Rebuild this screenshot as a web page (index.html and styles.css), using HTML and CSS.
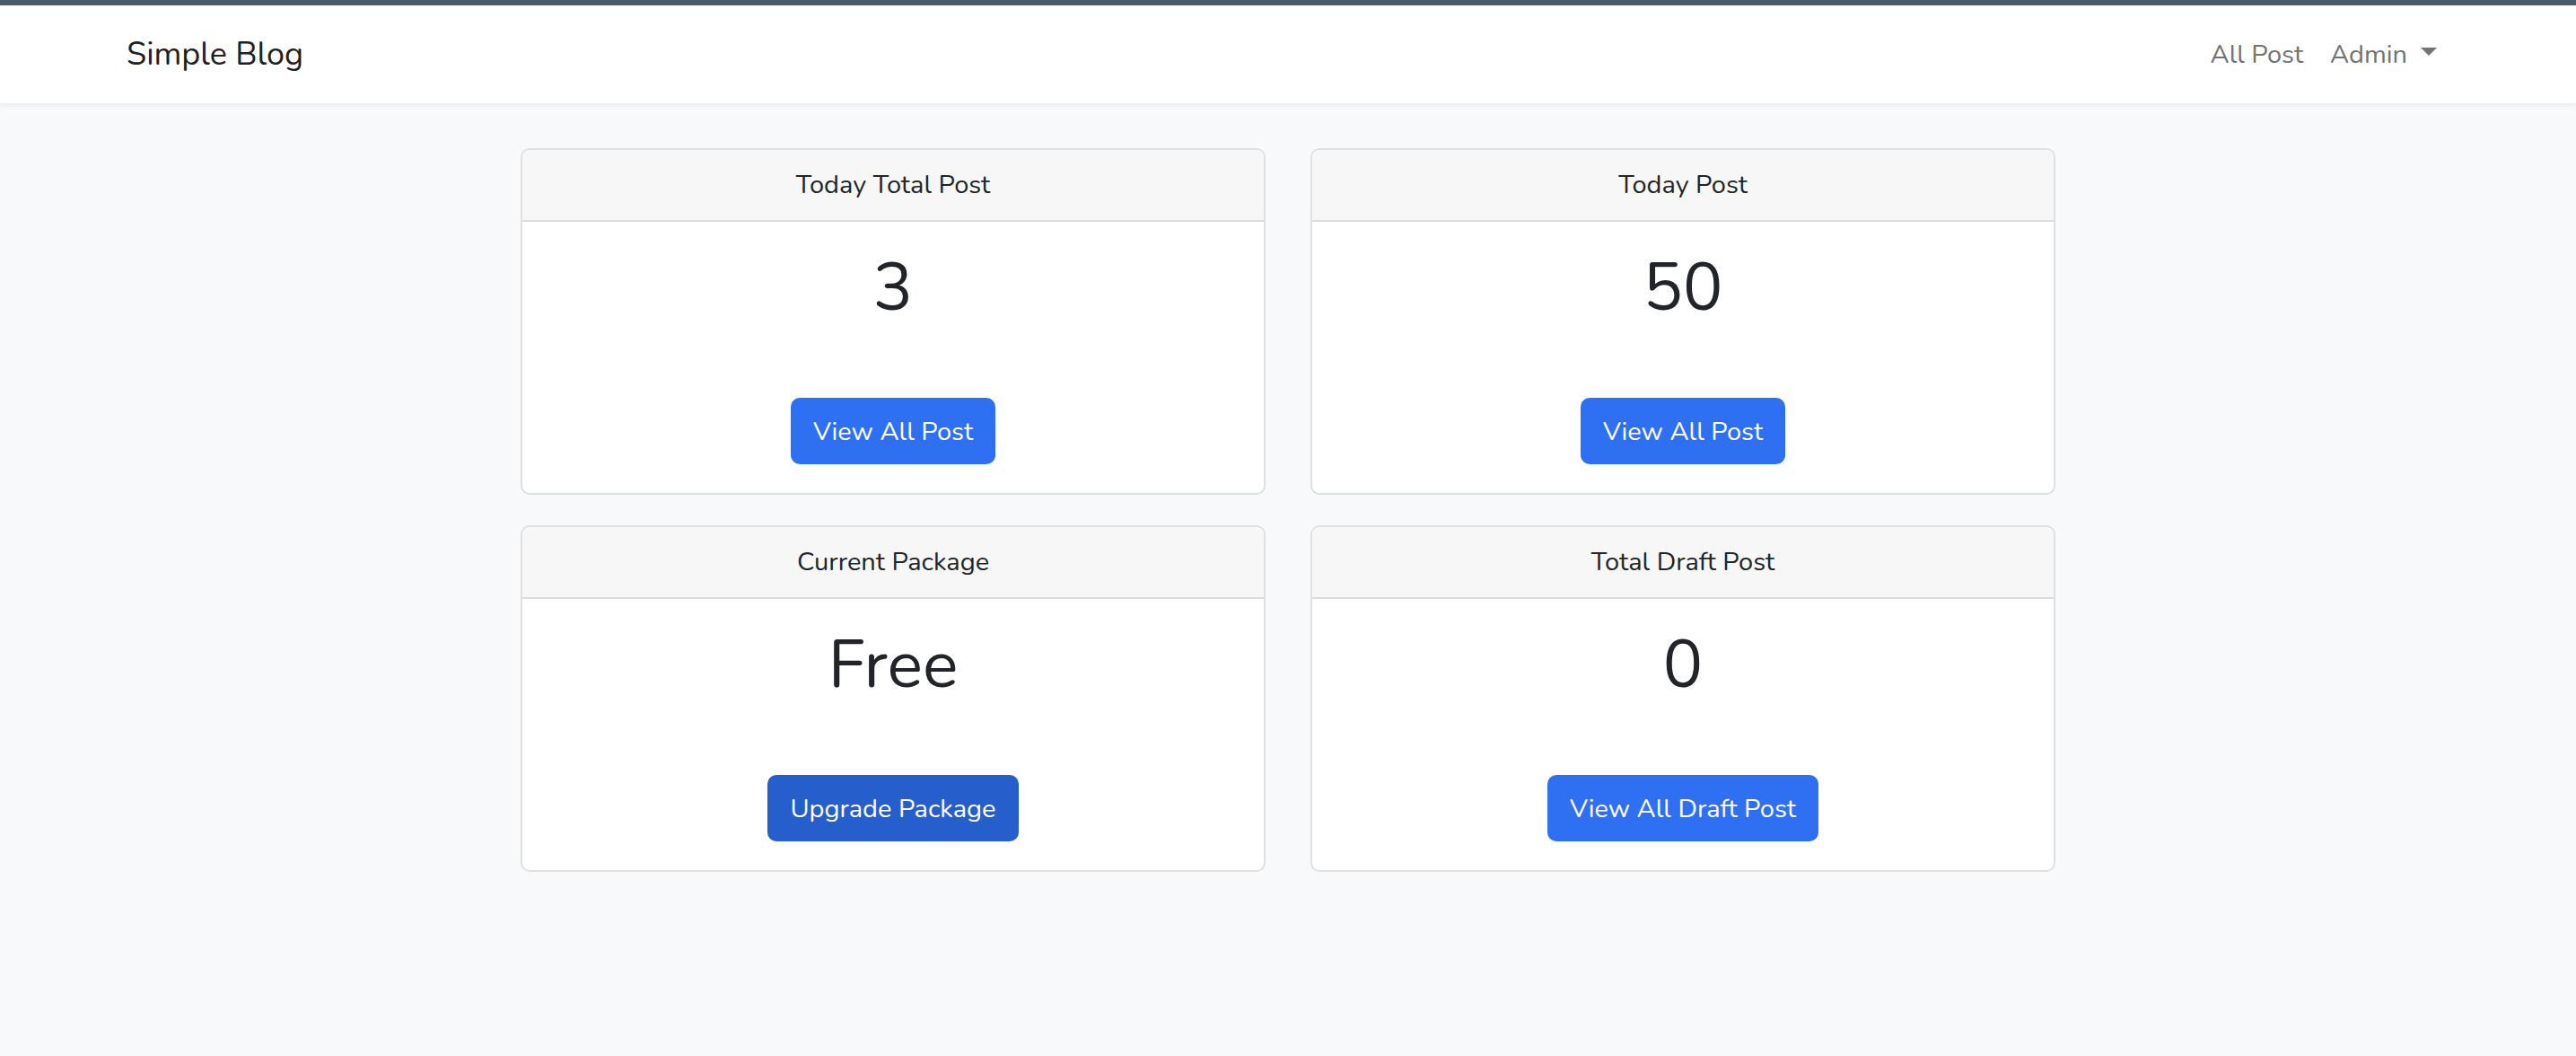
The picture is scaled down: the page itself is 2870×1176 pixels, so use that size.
FILE: index.html
```html
<!DOCTYPE html>
<html lang="en">
<head>
<meta charset="utf-8">
<title>Simple Blog</title>
<link rel="stylesheet" href="styles.css">
</head>
<body>
<nav class="navbar">
  <div class="nav-inner">
    <a class="brand" href="#">Simple Blog</a>
    <ul class="nav-links">
      <li><a class="nav-link" href="#">All Post</a></li>
      <li><a class="nav-link dropdown" href="#">Admin<span class="caret"></span></a></li>
    </ul>
  </div>
</nav>
<main class="content">
  <div class="grid">
    <div class="card">
      <div class="card-header">Today Total Post</div>
      <div class="card-body">
        <h1 class="stat">3</h1>
        <a class="btn" href="#">View All Post</a>
      </div>
    </div>
    <div class="card">
      <div class="card-header">Today Post</div>
      <div class="card-body">
        <h1 class="stat">50</h1>
        <a class="btn" href="#">View All Post</a>
      </div>
    </div>
    <div class="card">
      <div class="card-header">Current Package</div>
      <div class="card-body">
        <h1 class="stat">Free</h1>
        <a class="btn btn-dark" href="#">Upgrade Package</a>
      </div>
    </div>
    <div class="card">
      <div class="card-header">Total Draft Post</div>
      <div class="card-body">
        <h1 class="stat">0</h1>
        <a class="btn" href="#">View All Draft Post</a>
      </div>
    </div>
  </div>
</main>
</body>
</html>
```
FILE: styles.css
```css
* { box-sizing: border-box; }
html, body { margin: 0; padding: 0; }
body {
  background: #f8f9fb;
  font-family: "Nunito", Lato, "Noto Sans", sans-serif;
  color: #212529;
  min-height: 1176px;
}
.navbar {
  background: #fff;
  border-top: 6px solid #4a5a66;
  box-shadow: 0 2px 6px rgba(0,0,0,0.07);
  height: 115px;
}
.nav-inner {
  height: 109px;
  display: flex;
  align-items: center;
  justify-content: space-between;
  padding: 0 155px 0 141px;
}
.brand {
  font-size: 36px;
  color: #212121;
  text-decoration: none;
}
.nav-links {
  list-style: none;
  margin: 0;
  padding: 0;
  display: flex;
  gap: 30px;
}
.nav-link {
  font-size: 29px;
  color: #737373;
  text-decoration: none;
  display: flex;
  align-items: center;
}
.caret {
  display: inline-block;
  width: 0;
  height: 0;
  margin-left: 15px;
  border-left: 9px solid transparent;
  border-right: 9px solid transparent;
  border-top: 9px solid #737373;
  margin-top: -6px;
}
.content {
  padding-top: 50px;
  display: flex;
  justify-content: center;
}
.grid {
  width: 1710px;
  display: grid;
  grid-template-columns: 830px 830px;
  column-gap: 50px;
  row-gap: 34px;
}
.card {
  background: #fff;
  border: 2px solid #dfe0e2;
  border-radius: 10px;
  overflow: hidden;
  height: 386px;
  display: flex;
  flex-direction: column;
}
.card-header {
  background: #f7f7f7;
  border-bottom: 2px solid #dcdcdc;
  height: 80px;
  display: flex;
  align-items: center;
  justify-content: center;
  font-size: 29px;
  color: #212529;
  padding-bottom: 2px;
}
.card-body {
  flex: 1;
  display: flex;
  flex-direction: column;
  align-items: center;
  padding: 26px 32px 32px;
}
.stat {
  margin: 0;
  font-size: 74px;
  font-weight: 400;
  line-height: 96px;
  color: #212529;
}
.btn {
  margin-top: auto;
  height: 74px;
  padding: 0 25px;
  display: inline-flex;
  align-items: center;
  font-size: 29px;
  color: #fff;
  background: #2f70f2;
  border-radius: 10px;
  text-decoration: none;
}
.btn-dark {
  background: #265fcc;
}
```
